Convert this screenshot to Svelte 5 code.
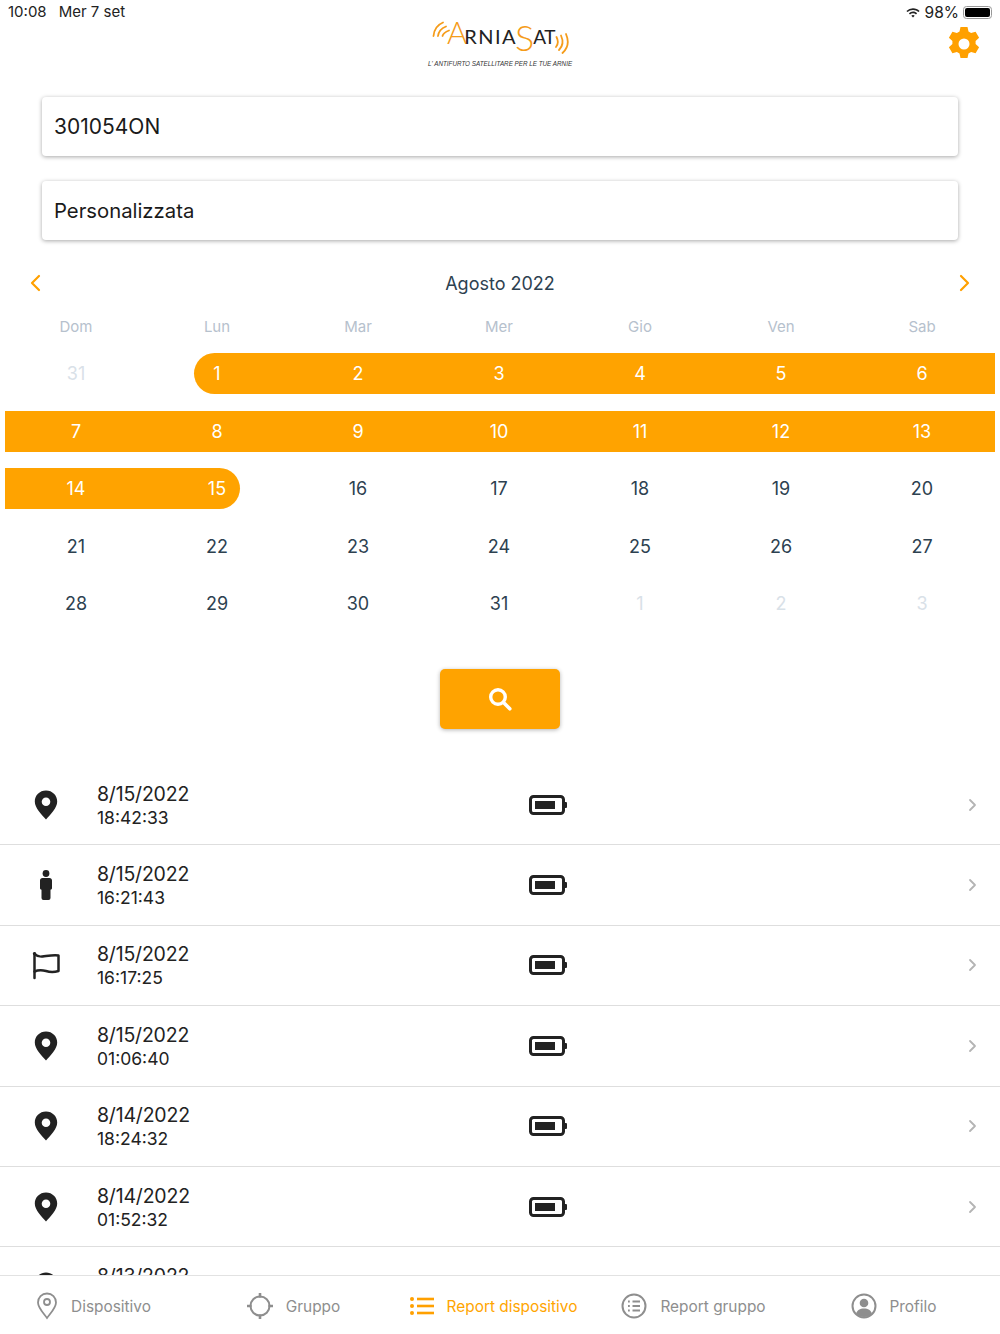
<script>
    const weekdays = ['Dom', 'Lun', 'Mar', 'Mer', 'Gio', 'Ven', 'Sab'];

    // off = outside the month, sel = in range, start/end = ends of the range pill
    const days = [
        { n: 31, off: true },
        { n: 1, sel: true, start: true }, { n: 2, sel: true }, { n: 3, sel: true }, { n: 4, sel: true }, { n: 5, sel: true }, { n: 6, sel: true },
        { n: 7, sel: true }, { n: 8, sel: true }, { n: 9, sel: true }, { n: 10, sel: true }, { n: 11, sel: true }, { n: 12, sel: true }, { n: 13, sel: true },
        { n: 14, sel: true }, { n: 15, sel: true, end: true }, { n: 16 }, { n: 17 }, { n: 18 }, { n: 19 }, { n: 20 },
        { n: 21 }, { n: 22 }, { n: 23 }, { n: 24 }, { n: 25 }, { n: 26 }, { n: 27 },
        { n: 28 }, { n: 29 }, { n: 30 }, { n: 31 }, { n: 1, off: true }, { n: 2, off: true }, { n: 3, off: true }
    ];

    const reports = [
        { icon: 'pin', date: '8/15/2022', time: '18:42:33' },
        { icon: 'person', date: '8/15/2022', time: '16:21:43' },
        { icon: 'flag', date: '8/15/2022', time: '16:17:25' },
        { icon: 'pin', date: '8/15/2022', time: '01:06:40' },
        { icon: 'pin', date: '8/14/2022', time: '18:24:32' },
        { icon: 'pin', date: '8/14/2022', time: '01:52:32' },
        { icon: 'pin', date: '8/13/2022', time: '' }
    ];

    const tabs = ['Dispositivo', 'Gruppo', 'Report dispositivo', 'Report gruppo', 'Profilo'];
</script>

<div class="page">
    <div class="scroll">
        <header class="top">
            <div class="clock"><span>10:08</span><span>Mer 7 set</span></div>

            <div class="logo">
                <div class="logo-main">
                    <svg class="waves-l" width="18" height="17" viewBox="0 0 18 17" fill="none" stroke="#f59c1a" stroke-width="1.800" stroke-linecap="round">
                        <path d="M1.500 15 C2 9 5 4 11 1.500" />
                        <path d="M6 15 C6.500 11 9 7.500 14 5.500" />
                        <path d="M10.500 15 C11 13 13 11 17 9.500" />
                    </svg><span class="logo-big orange a">A</span><span class="logo-word rnia">RNIA</span><span class="logo-big orange s">S</span><span class="logo-word at">AT</span><svg class="waves-r" width="15" height="21" viewBox="0 0 15 21" fill="none" stroke="#f59c1a" stroke-width="1.800" stroke-linecap="round">
                        <path d="M1.500 4 C3.500 8 3.500 11 1 14" />
                        <path d="M6 2.500 C8.500 8 8 13 4 17" />
                        <path d="M11 1 C14 8 13 15 7.500 20" />
                    </svg>
                </div>
                <div class="tagline">L' ANTIFURTO SATELLITARE PER LE TUE ARNIE</div>
            </div>

            <div class="top-right">
                <div class="status">
                    <svg width="16" height="12" viewBox="0 0 16 12" fill="#222">
                        <path d="M8 2.200c2.600 0 4.900 1 6.600 2.700l-1.100 1.200A7.800 7.800 0 0 0 8 3.900a7.800 7.800 0 0 0-5.500 2.200L1.400 4.900A9.400 9.400 0 0 1 8 2.200z" />
                        <path d="M8 5.600c1.600 0 3 .6 4.100 1.600L11 8.400A4.400 4.400 0 0 0 8 7.200a4.400 4.400 0 0 0-3 1.200L3.900 7.200A6 6 0 0 1 8 5.600z" />
                        <path d="M8 9c.7 0 1.300.3 1.700.7L8 11.600 6.300 9.700C6.700 9.300 7.300 9 8 9z" />
                    </svg>
                    <span>98%</span>
                    <div class="battery"><div class="battery-fill"></div></div>
                </div>
                <svg class="gear" width="34" height="36" viewBox="0 0 34 36" fill="#ffa000">
                    <path fill-rule="evenodd" d="M13.500 1h7l1 4.600 2.600 1.500 4.500-1.400 3.500 6-3.500 3.200v3.200l3.500 3.200-3.500 6-4.500-1.400-2.600 1.500-1 4.600h-7l-1-4.600-2.600-1.500-4.500 1.400-3.500-6 3.500-3.200v-3.200l-3.500-3.200 3.500-6 4.500 1.400 2.600-1.500zM17 12.500a5.500 5.500 0 1 0 0 11 5.500 5.500 0 0 0 0-11z" />
                </svg>
            </div>
        </header>

        <div class="fields">
            <div class="field code">301054ON</div>
            <div class="field">Personalizzata</div>
        </div>

        <section class="calendar">
            <div class="month">
                <svg width="12" height="18" viewBox="0 0 12 18" fill="none" stroke="#ffa000" stroke-width="2.200" stroke-linecap="round" stroke-linejoin="round"><path d="M10 2 3 9l7 7" /></svg>
                <span>Agosto 2022</span>
                <svg width="12" height="18" viewBox="0 0 12 18" fill="none" stroke="#ffa000" stroke-width="2.200" stroke-linecap="round" stroke-linejoin="round"><path d="m2 2 7 7-7 7" /></svg>
            </div>
            <div class="weekdays">
                {#each weekdays as w}
                    <span>{w}</span>
                {/each}
            </div>
            <div class="days">
                {#each days as d}
                    <div class="day">
                        <span class="num" class:off={d.off} class:sel={d.sel} class:start={d.start} class:end={d.end}>{d.n}</span>
                    </div>
                {/each}
            </div>
        </section>

        <div class="search-wrap">
            <button class="search" aria-label="Cerca">
                <svg width="26" height="26" viewBox="0 0 26 26" fill="none" stroke="#fff" stroke-linecap="round">
                    <circle cx="11" cy="11" r="7.300" stroke-width="3.400" />
                    <path d="m16.800 16.800 6 6" stroke-width="3.600" />
                </svg>
            </button>
        </div>

        <ul class="list">
            {#each reports as r}
                <li class="row">
                    <div class="row-icon">
                        {#if r.icon === 'pin'}
                            <svg width="24" height="30" viewBox="0 0 24 30" fill="#222">
                                <path fill-rule="evenodd" d="M12 .5C5.600.5.800 5.400.800 11.600c0 6.400 6.700 12.900 11.200 18 4.500-5.100 11.200-11.600 11.200-18C23.200 5.400 18.400.5 12 .5zm0 7a4.300 4.300 0 1 1 0 8.600 4.300 4.300 0 0 1 0-8.600z" />
                            </svg>
                        {:else if r.icon === 'person'}
                            <svg width="14" height="30" viewBox="0 0 14 30" fill="#222">
                                <circle cx="7" cy="3.500" r="3.400" />
                                <path d="M3.500 8h7C12 8 13 9 13 10.500V18c0 1-.6 1.600-1.500 1.700V28a2 2 0 0 1-2 2h-5a2 2 0 0 1-2-2v-8.300C1.600 19.600 1 19 1 18v-7.500C1 9 2 8 3.500 8z" />
                            </svg>
                        {:else}
                            <svg width="30" height="30" viewBox="0 0 30 30" fill="none" stroke="#222" stroke-width="2.500" stroke-linecap="round" stroke-linejoin="round">
                                <circle cx="3.500" cy="3.500" r="1.600" fill="#222" stroke="none" />
                                <path d="M3.500 3.500V28" />
                                <path d="M3.500 4C8 8 11 6.500 15 6c4-.5 9-1 12.500-.5V21c-3.500 1-7.500 1.500-12.500 0-4-1-8-1-11.500.5" />
                            </svg>
                        {/if}
                    </div>
                    <div class="row-text">
                        <span class="date">{r.date}</span>
                        <span class="time">{r.time}</span>
                    </div>
                    <svg class="row-batt" width="38" height="20" viewBox="0 0 38 20" fill="none">
                        <path d="M4.500 1.500h27a3 3 0 0 1 3 3v11a3 3 0 0 1-3 3h-27a3 3 0 0 1-3-3v-11a3 3 0 0 1 3-3z" stroke="#222" stroke-width="3" />
                        <rect x="35" y="7" width="3" height="6" rx="1" fill="#222" />
                        <rect x="6" y="6" width="20" height="8" fill="#222" />
                    </svg>
                    <svg class="row-chev" width="9" height="14" viewBox="0 0 9 14" fill="none" stroke="#b4b4b4" stroke-width="1.800" stroke-linecap="round" stroke-linejoin="round"><path d="m2 2 5 5-5 5" /></svg>
                </li>
            {/each}
        </ul>
    </div>

    <nav class="tabs">
        {#each tabs as t, i}
            <div class="tab" class:active={i === 2}>
                {#if i === 0}
                    <svg width="22" height="28" viewBox="0 0 22 28" fill="none" stroke="#8e8e8e" stroke-width="1.800">
                        <path d="M11 1.500c-5.200 0-9 4-9 9 0 5.300 5.300 10.500 9 15.500 3.700-5 9-10.200 9-15.500 0-5-3.800-9-9-9z" />
                        <circle cx="11" cy="10" r="3" />
                    </svg>
                {:else if i === 1}
                    <svg width="26" height="26" viewBox="0 0 26 26" fill="none" stroke="#8e8e8e" stroke-width="2">
                        <circle cx="13" cy="13" r="9.500" />
                        <path d="M13 .5v3M13 22.500v3M.5 13h3M22.500 13h3" stroke-width="2.600" stroke-linecap="round" />
                    </svg>
                {:else if i === 2}
                    <svg width="24" height="20" viewBox="0 0 24 20" fill="#ffa000">
                        <circle cx="2" cy="3" r="2" /><circle cx="2" cy="10" r="2" /><circle cx="2" cy="17" r="2" />
                        <rect x="7" y="1.700" width="17" height="2.600" /><rect x="7" y="8.700" width="17" height="2.600" /><rect x="7" y="15.700" width="17" height="2.600" />
                    </svg>
                {:else if i === 3}
                    <svg width="26" height="26" viewBox="0 0 26 26" fill="none" stroke="#8e8e8e" stroke-width="2">
                        <circle cx="13" cy="13" r="11.500" />
                        <path d="M11.500 8.500H19M11.500 13H19M11.500 17.500H19" />
                        <path d="M7 8.500h1.800M7 13h1.800M7 17.500h1.800" stroke-width="2.200" />
                    </svg>
                {:else}
                    <svg width="26" height="26" viewBox="0 0 26 26" fill="none" stroke="#8e8e8e" stroke-width="2">
                        <circle cx="13" cy="13" r="11.500" />
                        <circle cx="13" cy="10" r="4.300" fill="#8e8e8e" stroke="none" />
                        <path d="M5 21c1-4 4-5.500 8-5.500s7 1.500 8 5.500c-2 2-5 3-8 3s-6-1-8-3z" fill="#8e8e8e" stroke="none" />
                    </svg>
                {/if}
                <span>{t}</span>
            </div>
        {/each}
    </nav>
</div>

<style>
    :global(body) {
        margin: 0;
        background: #fff;
    }

    .page {
        width: 1000px;
        height: 1334px;
        display: flex;
        flex-direction: column;
        font-family: Inter, "Liberation Sans", sans-serif;
        color: #222;
        overflow: hidden;
    }

    .scroll {
        flex: 1;
        min-height: 0;
        overflow: hidden;
    }

    .top {
        height: 97px;
        display: flex;
        justify-content: space-between;
        align-items: flex-start;
        padding: 0 8px;
        box-sizing: border-box;
        position: relative;
    }

    .clock {
        display: flex;
        gap: 12px;
        font-size: 15px;
        line-height: 24px;
    }

    .logo {
        position: absolute;
        left: 428px;
        top: 14px;
        width: 146px;
    }

    .logo-main {
        height: 44px;
        line-height: 36px;
        white-space: nowrap;
        padding-left: 4px;
        font-family: Lato, "Liberation Sans", sans-serif;
    }

    .waves-l {
        vertical-align: 6px;
    }

    .waves-r {
        vertical-align: -10px;
    }

    .logo-word {
        font-size: 20px;
        font-weight: 400;
        color: #222;
    }

    .logo-word.rnia {
        letter-spacing: 1.400px;
        margin-left: -3px;
    }

    .logo-word.at {
        font-size: 19px;
        letter-spacing: -0.500px;
    }

    .logo-big {
        font-weight: 300;
    }

    .orange {
        color: #f59c1a;
    }

    .logo-big.a {
        font-size: 31px;
        margin-left: -3px;
    }

    .logo-big.s {
        font-size: 36px;
        margin-left: -2px;
        margin-right: -1px;
        vertical-align: -7px;
    }

    .tagline {
        font-family: "Liberation Sans", sans-serif;
        font-size: 6.300px;
        font-style: italic;
        white-space: nowrap;
        text-align: center;
        width: 144px;
        line-height: 12px;
        color: #333;
    }

    .top-right {
        display: flex;
        flex-direction: column;
        align-items: flex-end;
    }

    .status {
        display: flex;
        align-items: center;
        height: 24px;
        gap: 4px;
        font-size: 15.500px;
        margin-left: -4px;
    }

    .battery {
        width: 29px;
        height: 13px;
        border: 1px solid #999;
        border-radius: 3.500px;
        padding: 1px;
        box-sizing: border-box;
    }

    .battery-fill {
        width: 100%;
        height: 100%;
        background: #000;
        border-radius: 2px;
    }

    .gear {
        margin-right: 11px;
        margin-top: 2px;
    }

    .fields {
        display: flex;
        flex-direction: column;
        gap: 25px;
        padding: 0 42px;
    }

    .field {
        height: 59px;
        line-height: 59px;
        padding: 0 12px;
        font-size: 20.300px;
        background: #fff;
        border-radius: 4px;
        box-shadow: 0 1px 4px rgba(0, 0, 0, 0.35);
        color: #1a1a1a;
    }

    .field.code {
        font-size: 21px;
    }

    .calendar {
        padding: 0 0 0 5px;
        margin-top: 25px;
    }

    .month {
        height: 36px;
        display: flex;
        align-items: center;
        justify-content: space-between;
        padding: 0 29px 0 24px;
        font-size: 18px;
        color: #2d4150;
    }

    .weekdays {
        display: grid;
        grid-template-columns: repeat(7, 141px);
        margin-top: 17px;
        height: 18px;
        line-height: 18px;
        text-align: center;
        text-indent: 1px;
        font-size: 15px;
        color: #b6c1cd;
    }

    .days {
        display: grid;
        grid-template-columns: repeat(6, 141px) 144px;
        grid-auto-rows: 57.600px;
        margin-top: 17px;
    }

    .day {
        display: flex;
        align-items: flex-start;
    }

    .num {
        width: 100%;
        height: 41px;
        box-sizing: border-box;
        line-height: 41px;
        text-align: center;
        text-indent: 1px;
        font-size: 18px;
        color: #2d4150;
    }

    .day:nth-child(7n) .num {
        padding-right: 3px;
    }

    .num.off {
        color: #d9e1e8;
    }

    .num.sel {
        background: #ffa300;
        color: #fff;
    }

    .num.start {
        border-radius: 21px 0 0 21px;
        margin-left: 48px;
        padding-right: 48px;
    }

    .num.end {
        border-radius: 0 21px 21px 0;
        margin-right: 47px;
        padding-left: 47px;
    }

    .search-wrap {
        display: flex;
        justify-content: center;
        margin-top: 28px;
    }

    .search {
        width: 120px;
        height: 60px;
        border: 0;
        border-radius: 5px;
        background: #ffa300;
        box-shadow: 0 1px 4px rgba(0, 0, 0, 0.3);
        display: flex;
        align-items: center;
        justify-content: center;
        padding: 0;
    }

    .list {
        list-style: none;
        margin: 36px 0 0;
        padding: 0;
    }

    .row {
        height: 80.400px;
        box-sizing: border-box;
        border-bottom: 1.500px solid #dedede;
        display: flex;
        align-items: center;
    }

    .row-icon {
        width: 92px;
        margin-right: 5px;
        display: flex;
        justify-content: center;
    }

    .row-text {
        display: flex;
        flex-direction: column;
        width: 432px;
        flex-shrink: 0;
    }

    .date {
        font-size: 19.500px;
        letter-spacing: -0.200px;
        line-height: 25px;
    }

    .time {
        font-size: 17.500px;
        line-height: 21px;
        min-height: 21px;
    }

    .row-chev {
        margin-left: auto;
        margin-right: 23px;
    }

    .tabs {
        height: 59px;
        flex-shrink: 0;
        border-top: 1px solid #e2e2e2;
        background: #fff;
        box-sizing: border-box;
        display: grid;
        grid-template-columns: repeat(5, 1fr);
    }

    .tab {
        display: flex;
        align-items: center;
        justify-content: center;
        gap: 13px;
        padding: 2px 13px 0 0;
        font-size: 15.400px;
        color: #8e8e8e;
        white-space: nowrap;
    }

    .tab.active {
        color: #ffa500;
    }
</style>
